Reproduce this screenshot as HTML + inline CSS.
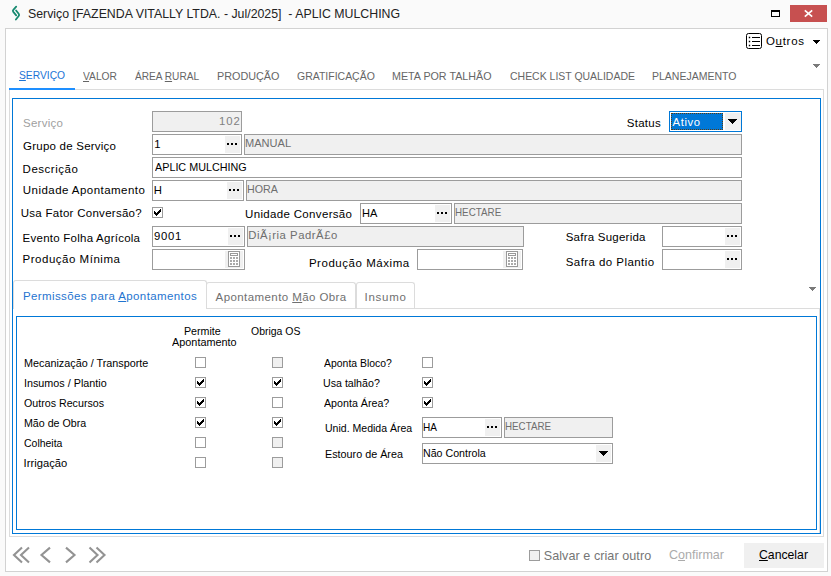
<!DOCTYPE html>
<html lang="pt-BR"><head><meta charset="utf-8"><title>Serviço</title>
<style>
html,body{margin:0;padding:0}
body{width:831px;height:576px;background:#fafafa;overflow:hidden;position:relative;font-family:"Liberation Sans",sans-serif}
.a{position:absolute;box-sizing:border-box}
.t{position:absolute;white-space:pre;line-height:16px;transform-origin:0 0;font-family:"Liberation Sans",sans-serif}
.t u{text-decoration:underline;text-underline-offset:1px;text-decoration-thickness:1px}
.f{position:absolute;box-sizing:border-box;border:1px solid #9c9c9c;background:#fff}
.g{background:#f0f0f0}
.b{position:absolute;background:#f0f0f0}
.d{position:absolute;width:2px;height:2px;background:#000;box-shadow:4px 0 0 #000,8px 0 0 #000}
.cb{position:absolute;box-sizing:border-box;width:11px;height:11px;border:1px solid #9c9c9c;background:#fff}
.cb.dis{background:#f0f0f0}
</style></head>
<body>
<div class="a" style="left:790px;top:5px;width:37px;height:17px;background:#c75050"></div>
<svg class="a" style="left:803px;top:9px" width="11" height="9" viewBox="0 0 11 9"><path d="M1.8 1.4L9.2 7.6M9.2 1.4L1.8 7.6" stroke="#fff" stroke-width="1.7" fill="none"/></svg>
<div class="a" style="left:771px;top:10px;width:9px;height:7px;border:1px solid #000;border-top-width:2px"></div>
<svg class="a" style="left:10px;top:4px" width="12" height="18" viewBox="0 0 12 18"><path d="M6.2 2.7L3.3 5.8Q2.4 6.75 3.3 7.9L6.2 11.3M6.1 6.5L8.7 9.8Q9.6 10.9 8.7 12L5.9 15.5" stroke="#16896f" stroke-width="1.8" fill="none" stroke-linecap="round" stroke-linejoin="round"/></svg>
<div class="a" style="left:5px;top:28px;width:823px;height:544px;border:1px solid #d2d2d2;background:#fff"></div>
<svg class="a" style="left:746px;top:33px" width="16" height="16" viewBox="0 0 16 16"><rect x="0.5" y="0.5" width="15" height="15" rx="2" fill="none" stroke="#000" stroke-width="1"/><path d="M6 4.5h8M6 8.5h8M6 12.5h8" stroke="#000" stroke-width="1"/><path d="M2.8 4.5h1.4M2.8 8.5h1.4M2.8 12.5h1.4" stroke="#000" stroke-width="1.4"/></svg>
<svg class="a" style="left:813px;top:40px" width="7" height="4" viewBox="0 0 7 4" shape-rendering="crispEdges" fill="#000"><rect x="0" y="0" width="7" height="1"/><rect x="1" y="1" width="5" height="1"/><rect x="2" y="2" width="3" height="1"/><rect x="3" y="3" width="1" height="1"/></svg>
<svg class="a" style="left:813px;top:64px" width="7" height="4" viewBox="0 0 7 4" shape-rendering="crispEdges" fill="#7a7a7a"><rect x="0" y="0" width="7" height="1"/><rect x="1" y="1" width="5" height="1"/><rect x="2" y="2" width="3" height="1"/><rect x="3" y="3" width="1" height="1"/></svg>
<div class="a" style="left:9px;top:89px;width:815px;height:448px;border:1px solid #dcdcdc"></div>
<div class="a" style="left:9px;top:88px;width:66px;height:2px;background:#1e8fff"></div>
<div class="a" style="left:12px;top:98px;width:809px;height:436px;border:1px solid #0078d7"></div>
<div class="f g" style="left:152px;top:111px;width:90px;height:21px"></div>
<div class="f" style="left:152px;top:134px;width:90px;height:21px"></div>
<div class="b" style="left:225px;top:136px;width:15px;height:17px"></div><div class="d" style="left:227px;top:143px"></div>
<div class="f g" style="left:244px;top:134px;width:498px;height:21px"></div>
<div class="f" style="left:152px;top:157px;width:590px;height:21px"></div>
<div class="f" style="left:152px;top:180px;width:92px;height:21px"></div>
<div class="b" style="left:227px;top:182px;width:15px;height:17px"></div><div class="d" style="left:229px;top:189px"></div>
<div class="f g" style="left:246px;top:180px;width:496px;height:21px"></div>
<div class="cb" style="left:152px;top:207px"><svg class="a" style="left:0;top:0" width="9" height="9" viewBox="0 0 9 9" shape-rendering="crispEdges"><path d="M1 3h1v1h1v1h1v-1h1v-1h1v-1h1v-1h1v3h-1v1h-1v1h-1v1h-1v1h-1v-1h-1v-1h-1z" fill="#000"/></svg></div>
<div class="f" style="left:360px;top:203px;width:92px;height:21px"></div>
<div class="b" style="left:435px;top:205px;width:15px;height:17px"></div><div class="d" style="left:437px;top:212px"></div>
<div class="f g" style="left:454px;top:203px;width:288px;height:21px"></div>
<div class="f" style="left:152px;top:226px;width:93px;height:21px"></div>
<div class="b" style="left:228px;top:228px;width:15px;height:17px"></div><div class="d" style="left:230px;top:235px"></div>
<div class="f g" style="left:247px;top:226px;width:277px;height:21px"></div>
<div class="f" style="left:662px;top:226px;width:80px;height:21px"></div>
<div class="b" style="left:725px;top:228px;width:15px;height:17px"></div><div class="d" style="left:727px;top:235px"></div>
<div class="f" style="left:152px;top:249px;width:93px;height:21px"></div>
<div class="b" style="left:225px;top:251px;width:18px;height:17px"></div><svg class="a" style="left:228px;top:251px" width="12" height="16" viewBox="0 0 12 16" shape-rendering="crispEdges"><rect x="0.5" y="0.5" width="11" height="15" fill="#fff" stroke="#999"/><rect x="2.5" y="2.5" width="7" height="2" fill="#fff" stroke="#999"/><rect x="2" y="6" width="2" height="2" fill="#aaa"/><rect x="5" y="6" width="2" height="2" fill="#aaa"/><rect x="8" y="6" width="2" height="2" fill="#aaa"/><rect x="2" y="9" width="2" height="2" fill="#aaa"/><rect x="5" y="9" width="2" height="2" fill="#aaa"/><rect x="8" y="9" width="2" height="2" fill="#aaa"/><rect x="2" y="12" width="2" height="2" fill="#aaa"/><rect x="5" y="12" width="2" height="2" fill="#aaa"/><rect x="8" y="12" width="2" height="2" fill="#aaa"/></svg>
<div class="f" style="left:417px;top:249px;width:106px;height:21px"></div>
<div class="b" style="left:503px;top:251px;width:18px;height:17px"></div><svg class="a" style="left:506px;top:251px" width="12" height="16" viewBox="0 0 12 16" shape-rendering="crispEdges"><rect x="0.5" y="0.5" width="11" height="15" fill="#fff" stroke="#999"/><rect x="2.5" y="2.5" width="7" height="2" fill="#fff" stroke="#999"/><rect x="2" y="6" width="2" height="2" fill="#aaa"/><rect x="5" y="6" width="2" height="2" fill="#aaa"/><rect x="8" y="6" width="2" height="2" fill="#aaa"/><rect x="2" y="9" width="2" height="2" fill="#aaa"/><rect x="5" y="9" width="2" height="2" fill="#aaa"/><rect x="8" y="9" width="2" height="2" fill="#aaa"/><rect x="2" y="12" width="2" height="2" fill="#aaa"/><rect x="5" y="12" width="2" height="2" fill="#aaa"/><rect x="8" y="12" width="2" height="2" fill="#aaa"/></svg>
<div class="f" style="left:662px;top:249px;width:80px;height:21px"></div>
<div class="b" style="left:725px;top:251px;width:15px;height:17px"></div><div class="d" style="left:727px;top:258px"></div>
<div class="f" style="left:669px;top:111px;width:73px;height:21px;border-color:#0078d7"></div>
<div class="a" style="left:671px;top:113px;width:52px;height:17px;background:#0078d7;border:1px dotted #5a3a10"></div>
<div class="b" style="left:725px;top:113px;width:16px;height:17px"></div>
<svg class="a" style="left:728px;top:119px" width="9" height="5" viewBox="0 0 9 5" shape-rendering="crispEdges" fill="#000"><rect x="0" y="0" width="9" height="1"/><rect x="1" y="1" width="7" height="1"/><rect x="2" y="2" width="5" height="1"/><rect x="3" y="3" width="3" height="1"/><rect x="4" y="4" width="1" height="1"/></svg>
<div class="a" style="left:206px;top:282px;width:150px;height:27px;border:1px solid #dcdcdc;border-bottom:none;border-radius:3px 3px 0 0;background:#fff"></div>
<div class="a" style="left:356px;top:282px;width:59px;height:27px;border:1px solid #dcdcdc;border-bottom:none;border-radius:3px 3px 0 0;background:#fff"></div>
<div class="a" style="left:13px;top:308px;width:807px;height:1px;background:#dcdcdc"></div>
<div class="a" style="left:13px;top:280px;width:194px;height:29px;border:1px solid #dcdcdc;border-bottom:none;border-radius:3px 3px 0 0;background:#fff"></div>
<div class="a" style="left:819px;top:308px;width:1px;height:225px;background:#dcdcdc"></div>
<svg class="a" style="left:809px;top:287px" width="7" height="4" viewBox="0 0 7 4" shape-rendering="crispEdges" fill="#7a7a7a"><rect x="0" y="0" width="7" height="1"/><rect x="1" y="1" width="5" height="1"/><rect x="2" y="2" width="3" height="1"/><rect x="3" y="3" width="1" height="1"/></svg>
<div class="a" style="left:16px;top:316px;width:801px;height:214px;border:1px solid #0078d7"></div>
<div class="cb" style="left:195px;top:357px"></div>
<div class="cb" style="left:195px;top:377px"><svg class="a" style="left:0;top:0" width="9" height="9" viewBox="0 0 9 9" shape-rendering="crispEdges"><path d="M1 3h1v1h1v1h1v-1h1v-1h1v-1h1v-1h1v3h-1v1h-1v1h-1v1h-1v1h-1v-1h-1v-1h-1z" fill="#000"/></svg></div>
<div class="cb" style="left:195px;top:397px"><svg class="a" style="left:0;top:0" width="9" height="9" viewBox="0 0 9 9" shape-rendering="crispEdges"><path d="M1 3h1v1h1v1h1v-1h1v-1h1v-1h1v-1h1v3h-1v1h-1v1h-1v1h-1v1h-1v-1h-1v-1h-1z" fill="#000"/></svg></div>
<div class="cb" style="left:195px;top:417px"><svg class="a" style="left:0;top:0" width="9" height="9" viewBox="0 0 9 9" shape-rendering="crispEdges"><path d="M1 3h1v1h1v1h1v-1h1v-1h1v-1h1v-1h1v3h-1v1h-1v1h-1v1h-1v1h-1v-1h-1v-1h-1z" fill="#000"/></svg></div>
<div class="cb" style="left:195px;top:437px"></div>
<div class="cb" style="left:195px;top:457px"></div>
<div class="cb dis" style="left:272px;top:357px"></div>
<div class="cb" style="left:272px;top:377px"><svg class="a" style="left:0;top:0" width="9" height="9" viewBox="0 0 9 9" shape-rendering="crispEdges"><path d="M1 3h1v1h1v1h1v-1h1v-1h1v-1h1v-1h1v3h-1v1h-1v1h-1v1h-1v1h-1v-1h-1v-1h-1z" fill="#000"/></svg></div>
<div class="cb" style="left:272px;top:397px"></div>
<div class="cb" style="left:272px;top:417px"><svg class="a" style="left:0;top:0" width="9" height="9" viewBox="0 0 9 9" shape-rendering="crispEdges"><path d="M1 3h1v1h1v1h1v-1h1v-1h1v-1h1v-1h1v3h-1v1h-1v1h-1v1h-1v1h-1v-1h-1v-1h-1z" fill="#000"/></svg></div>
<div class="cb dis" style="left:272px;top:437px"></div>
<div class="cb dis" style="left:272px;top:457px"></div>
<div class="cb" style="left:422px;top:357px"></div>
<div class="cb" style="left:422px;top:377px"><svg class="a" style="left:0;top:0" width="9" height="9" viewBox="0 0 9 9" shape-rendering="crispEdges"><path d="M1 3h1v1h1v1h1v-1h1v-1h1v-1h1v-1h1v3h-1v1h-1v1h-1v1h-1v1h-1v-1h-1v-1h-1z" fill="#000"/></svg></div>
<div class="cb" style="left:422px;top:397px"><svg class="a" style="left:0;top:0" width="9" height="9" viewBox="0 0 9 9" shape-rendering="crispEdges"><path d="M1 3h1v1h1v1h1v-1h1v-1h1v-1h1v-1h1v3h-1v1h-1v1h-1v1h-1v1h-1v-1h-1v-1h-1z" fill="#000"/></svg></div>
<div class="f" style="left:422px;top:417px;width:80px;height:21px"></div>
<div class="b" style="left:485px;top:419px;width:15px;height:17px"></div><div class="d" style="left:487px;top:426px"></div>
<div class="f g" style="left:504px;top:417px;width:109px;height:21px"></div>
<div class="f" style="left:422px;top:443px;width:191px;height:21px"></div>
<div class="b" style="left:596px;top:445px;width:15px;height:17px"></div>
<svg class="a" style="left:599px;top:451px" width="9" height="5" viewBox="0 0 9 5" shape-rendering="crispEdges" fill="#000"><rect x="0" y="0" width="9" height="1"/><rect x="1" y="1" width="7" height="1"/><rect x="2" y="2" width="5" height="1"/><rect x="3" y="3" width="3" height="1"/><rect x="4" y="4" width="1" height="1"/></svg>
<svg class="a" style="left:12px;top:546px" width="96" height="18" viewBox="0 0 96 18"><path d="M10 1.6L2 9L10 16.4M17 1.6L9 9L17 16.4M38 1.6L29.5 9L38 16.4M54 1.6L62.5 9L54 16.4M77.5 1.6L85.5 9L77.5 16.4M84.5 1.6L92.5 9L84.5 16.4" stroke="#939393" stroke-width="2.1" fill="none"/></svg>
<div class="cb dis" style="left:529px;top:550px"></div>
<div class="b" style="left:744px;top:543px;width:80px;height:25px"></div>
<span class="t" style="left:27.67px;top:6.00px;font-size:12.6px;letter-spacing:0.000px;color:#222;transform:scaleX(0.9798)">Serviço [FAZENDA VITALLY LTDA. - Jul/2025]  - APLIC MULCHING</span>
<span class="t" style="left:765.90px;top:33.00px;font-size:11.5px;letter-spacing:0.720px;color:#000">O<u>u</u>tros</span>
<span class="t" style="left:18.90px;top:67.00px;font-size:11.3px;letter-spacing:0.000px;color:#1b74d6;transform:scaleX(0.9095)"><u>S</u>ERVIÇO</span>
<span class="t" style="left:83.00px;top:68.00px;font-size:11.3px;letter-spacing:0.000px;color:#666;transform:scaleX(0.9054)"><u>V</u>ALOR</span>
<span class="t" style="left:135.00px;top:68.00px;font-size:11.3px;letter-spacing:0.000px;color:#666;transform:scaleX(0.8947)">ÁREA <u>R</u>URAL</span>
<span class="t" style="left:216.54px;top:68.00px;font-size:11.3px;letter-spacing:0.000px;color:#666;transform:scaleX(0.9569)">PRODUÇÃO</span>
<span class="t" style="left:296.79px;top:68.00px;font-size:11.3px;letter-spacing:0.000px;color:#666;transform:scaleX(0.9277)">GRATIFICAÇÃO</span>
<span class="t" style="left:392.05px;top:68.00px;font-size:11.3px;letter-spacing:0.000px;color:#666;transform:scaleX(0.9492)">META POR TALHÃO</span>
<span class="t" style="left:509.79px;top:68.00px;font-size:11.3px;letter-spacing:0.000px;color:#666;transform:scaleX(0.9271)">CHECK LIST QUALIDADE</span>
<span class="t" style="left:651.57px;top:68.00px;font-size:11.3px;letter-spacing:0.000px;color:#666;transform:scaleX(0.9300)">PLANEJAMENTO</span>
<span class="t" style="left:23.00px;top:115.00px;font-size:11.5px;letter-spacing:0.267px;color:#a0a0a0">Serviço</span>
<span class="t" style="left:23.10px;top:138.00px;font-size:11.5px;letter-spacing:0.227px;color:#000">Grupo de Serviço</span>
<span class="t" style="left:22.60px;top:161.00px;font-size:11.5px;letter-spacing:0.519px;color:#000">Descrição</span>
<span class="t" style="left:22.85px;top:182.00px;font-size:11.5px;letter-spacing:0.453px;color:#000">Unidade Apontamento</span>
<span class="t" style="left:20.75px;top:205.00px;font-size:11.5px;letter-spacing:0.276px;color:#000">Usa Fator Conversão?</span>
<span class="t" style="left:22.60px;top:230.00px;font-size:11.5px;letter-spacing:0.245px;color:#000">Evento Folha Agrícola</span>
<span class="t" style="left:22.60px;top:251.00px;font-size:11.5px;letter-spacing:0.511px;color:#000">Produção Mínima</span>
<span class="t" style="left:626.80px;top:115.00px;font-size:11.5px;letter-spacing:0.270px;color:#000">Status</span>
<span class="t" style="left:245.05px;top:206.00px;font-size:11.5px;letter-spacing:0.331px;color:#000">Unidade Conversão</span>
<span class="t" style="left:308.90px;top:255.00px;font-size:11.5px;letter-spacing:0.543px;color:#000">Produção Máxima</span>
<span class="t" style="left:565.70px;top:229.00px;font-size:11.5px;letter-spacing:0.235px;color:#000">Safra Sugerida</span>
<span class="t" style="left:565.70px;top:254.00px;font-size:11.5px;letter-spacing:0.437px;color:#000">Safra do Plantio</span>
<span class="t" style="left:219.05px;top:113.00px;font-size:11.3px;letter-spacing:0.950px;color:#808080">102</span>
<span class="t" style="left:154.25px;top:136.00px;font-size:11.3px;letter-spacing:0.000px;color:#000">1</span>
<span class="t" style="left:245.02px;top:135.00px;font-size:11.3px;letter-spacing:0.000px;color:#6e6e6e;transform:scaleX(0.9792)">MANUAL</span>
<span class="t" style="left:154.50px;top:159.00px;font-size:11.3px;letter-spacing:0.000px;color:#000;transform:scaleX(0.9543)">APLIC MULCHING</span>
<span class="t" style="left:153.80px;top:182.00px;font-size:11.3px;letter-spacing:0.000px;color:#000">H</span>
<span class="t" style="left:247.06px;top:181.00px;font-size:11.3px;letter-spacing:0.000px;color:#6e6e6e;transform:scaleX(0.9449)">HORA</span>
<span class="t" style="left:362.02px;top:205.00px;font-size:11.3px;letter-spacing:0.000px;color:#000;transform:scaleX(0.9763)">HA</span>
<span class="t" style="left:455.13px;top:204.00px;font-size:11.3px;letter-spacing:0.000px;color:#6e6e6e;transform:scaleX(0.8696)">HECTARE</span>
<span class="t" style="left:154.00px;top:228.00px;font-size:11.3px;letter-spacing:0.750px;color:#000">9001</span>
<span class="t" style="left:248.20px;top:227.00px;font-size:11.3px;letter-spacing:0.532px;color:#6e6e6e">DiÃ¡ria PadrÃ£o</span>
<span class="t" style="left:672.60px;top:114.00px;font-size:11.3px;letter-spacing:0.588px;color:#fff">Ativo</span>
<span class="t" style="left:22.90px;top:288.00px;font-size:11.5px;letter-spacing:0.402px;color:#1f74d0">Permissões para <u>A</u>pontamentos</span>
<span class="t" style="left:215.60px;top:289.00px;font-size:11.5px;letter-spacing:0.416px;color:#707070">Apontamento <u>M</u>ão Obra</span>
<span class="t" style="left:364.50px;top:289.00px;font-size:11.5px;letter-spacing:0.750px;color:#707070">Insumo</span>
<span class="t" style="left:183.85px;top:323.00px;font-size:11.2px;letter-spacing:0.000px;color:#000;transform:scaleX(0.9541)">Permite</span>
<span class="t" style="left:172.00px;top:334.00px;font-size:11.2px;letter-spacing:0.000px;color:#000;transform:scaleX(0.9712)">Apontamento</span>
<span class="t" style="left:251.33px;top:323.00px;font-size:11.2px;letter-spacing:0.000px;color:#000;transform:scaleX(0.9353)">Obriga OS</span>
<span class="t" style="left:23.63px;top:355.00px;font-size:11.2px;letter-spacing:0.000px;color:#000;transform:scaleX(0.9658)">Mecanização / Transporte</span>
<span class="t" style="left:23.64px;top:375.00px;font-size:11.2px;letter-spacing:0.000px;color:#000;transform:scaleX(0.9632)">Insumos / Plantio</span>
<span class="t" style="left:24.12px;top:395.00px;font-size:11.2px;letter-spacing:0.000px;color:#000;transform:scaleX(0.9536)">Outros Recursos</span>
<span class="t" style="left:23.65px;top:415.00px;font-size:11.2px;letter-spacing:0.000px;color:#000;transform:scaleX(0.9518)">Mão de Obra</span>
<span class="t" style="left:24.13px;top:435.00px;font-size:11.2px;letter-spacing:0.000px;color:#000;transform:scaleX(0.9358)">Colheita</span>
<span class="t" style="left:23.60px;top:455.00px;font-size:11.2px;letter-spacing:0.013px;color:#000">Irrigação</span>
<span class="t" style="left:323.60px;top:355.00px;font-size:11.2px;letter-spacing:0.000px;color:#000;transform:scaleX(0.9331)">Aponta Bloco?</span>
<span class="t" style="left:322.89px;top:375.00px;font-size:11.2px;letter-spacing:0.000px;color:#000;transform:scaleX(0.9513)">Usa talhão?</span>
<span class="t" style="left:323.60px;top:395.00px;font-size:11.2px;letter-spacing:0.000px;color:#000;transform:scaleX(0.9544)">Aponta Área?</span>
<span class="t" style="left:325.19px;top:420.00px;font-size:11.2px;letter-spacing:0.000px;color:#000;transform:scaleX(0.9413)">Unid. Medida Área</span>
<span class="t" style="left:324.94px;top:446.00px;font-size:11.2px;letter-spacing:0.000px;color:#000;transform:scaleX(0.9638)">Estouro de Área</span>
<span class="t" style="left:423.30px;top:419.00px;font-size:11.2px;letter-spacing:0.000px;color:#000;transform:scaleX(0.8966)">HA</span>
<span class="t" style="left:505.43px;top:418.00px;font-size:11.3px;letter-spacing:0.000px;color:#6e6e6e;transform:scaleX(0.8657)">HECTARE</span>
<span class="t" style="left:423.25px;top:445.00px;font-size:11.2px;letter-spacing:0.000px;color:#000;transform:scaleX(0.9508)">Não Controla</span>
<span class="t" style="left:543.75px;top:548.00px;font-size:12.6px;letter-spacing:0.053px;color:#757575">Salvar e criar outro</span>
<span class="t" style="left:668.65px;top:547.00px;font-size:12.6px;letter-spacing:0.000px;color:#ababab;transform:scaleX(0.9945)">C<u>o</u>nfirmar</span>
<span class="t" style="left:758.80px;top:547.00px;font-size:12.6px;letter-spacing:0.000px;color:#000;transform:scaleX(0.9711)"><u>C</u>ancelar</span>
</body></html>
